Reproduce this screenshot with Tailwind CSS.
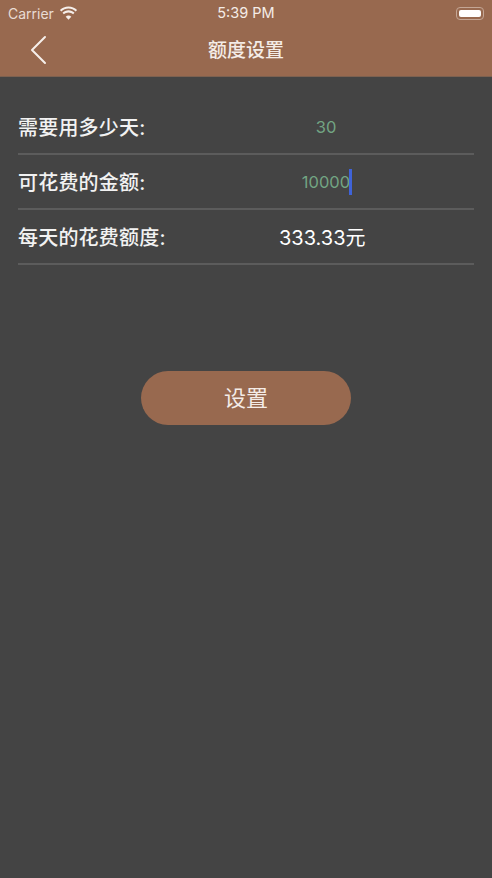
<!DOCTYPE html>
<html lang="zh-CN">
<head>
    <meta charset="UTF-8">
    <meta name="viewport" content="width=device-width, initial-scale=1.0">
    <title>额度设置</title>
    <script src="https://cdn.jsdelivr.net/npm/@tailwindcss/browser@4"></script>
</head>
<body class="w-[492px] h-[878px] overflow-hidden bg-[#444444] font-['Inter','Noto_Sans_CJK_SC',sans-serif]">

    <!-- header -->
    <div class="h-[77px] bg-[#98694f] border-b border-[#7d6150] text-[#f4ece7]">
        <div class="h-[26px] pl-2 pr-[8px] pt-px grid grid-cols-3 items-center text-[14.5px] leading-none">
            <div class="flex items-center gap-[5px] text-[#e9dcd4] text-[14px]">
                <span>Carrier</span>
                <svg class="w-[19px] h-[14px] -mt-[2px]" viewBox="0 0 19 14" fill="#f6efeb">
                    <path d="M9.5 2.6c2.8 0 5.3 1.1 7.2 2.9l1.4-1.5C15.8 1.8 12.8.4 9.5.4S3.2 1.8.9 4l1.4 1.5c1.9-1.8 4.4-2.9 7.2-2.9z"/>
                    <path d="M9.5 6.4c1.8 0 3.3.7 4.6 1.8l1.4-1.5c-1.6-1.5-3.7-2.4-6-2.4s-4.4.9-6 2.4l1.4 1.5c1.3-1.1 2.8-1.8 4.6-1.8z"/>
                    <path d="M9.5 9.6c-1.1 0-2 .4-2.8 1.1l2.8 3 2.8-3c-.8-.7-1.7-1.1-2.8-1.1z"/>
                </svg>
            </div>
            <div class="text-center">5:39 PM</div>
            <div class="flex justify-end">
                <div class="w-[28px] h-[13px] rounded-[4px] border border-[#c4a695] p-[2px]">
                    <div class="w-full h-full rounded-[2px] bg-white"></div>
                </div>
            </div>
        </div>
        <div class="relative h-[50px] flex items-center justify-center text-[19px]">
            <svg class="absolute left-[29px] top-[9px] w-[18px] h-[30px]" viewBox="0 0 18 30" fill="none" stroke="#f6efeb" stroke-width="2" stroke-linecap="round" stroke-linejoin="round">
                <path d="M16 2 3 15l13 13"/>
            </svg>
            <span class="mt-[1px] font-medium">额度设置</span>
        </div>
    </div>

    <!-- rows -->
    <div class="mt-[23px] mx-[18px] text-[20px] text-[#f2f2f2]">
        <div class="h-[55px] pt-[2px] flex items-center border-b-2 border-[#5c5c5c]">
            <span class="w-[261px] font-medium tracking-[0.2px]">需要用多少天:</span>
            <span class="w-[94px] text-center text-[16.5px] text-[#72a583]">30</span>
        </div>
        <div class="h-[55px] pt-[2px] flex items-center border-b-2 border-[#5c5c5c]">
            <span class="w-[261px] font-medium tracking-[0.2px]">可花费的金额:</span>
            <div class="w-[94px] flex justify-center text-[16.5px] text-[#72a583]">
                <span class="relative">10000<span class="absolute -right-[2px] -top-[1px] w-[3px] h-[26px] bg-[#3f63d8]"></span></span>
            </div>
        </div>
        <div class="h-[55px] pt-[2px] flex items-center border-b-2 border-[#5c5c5c]">
            <span class="w-[261px] font-medium tracking-[0.2px]">每天的花费额度:</span>
            <span class="w-[86px] text-center text-white whitespace-nowrap">333.33元</span>
        </div>
    </div>

    <!-- button -->
    <div class="mt-[106px] flex justify-center">
        <button class="w-[210px] h-[54px] rounded-full bg-[#98694f] text-[22px] text-[#f4ece7]">设置</button>
    </div>
</body>
</html>
